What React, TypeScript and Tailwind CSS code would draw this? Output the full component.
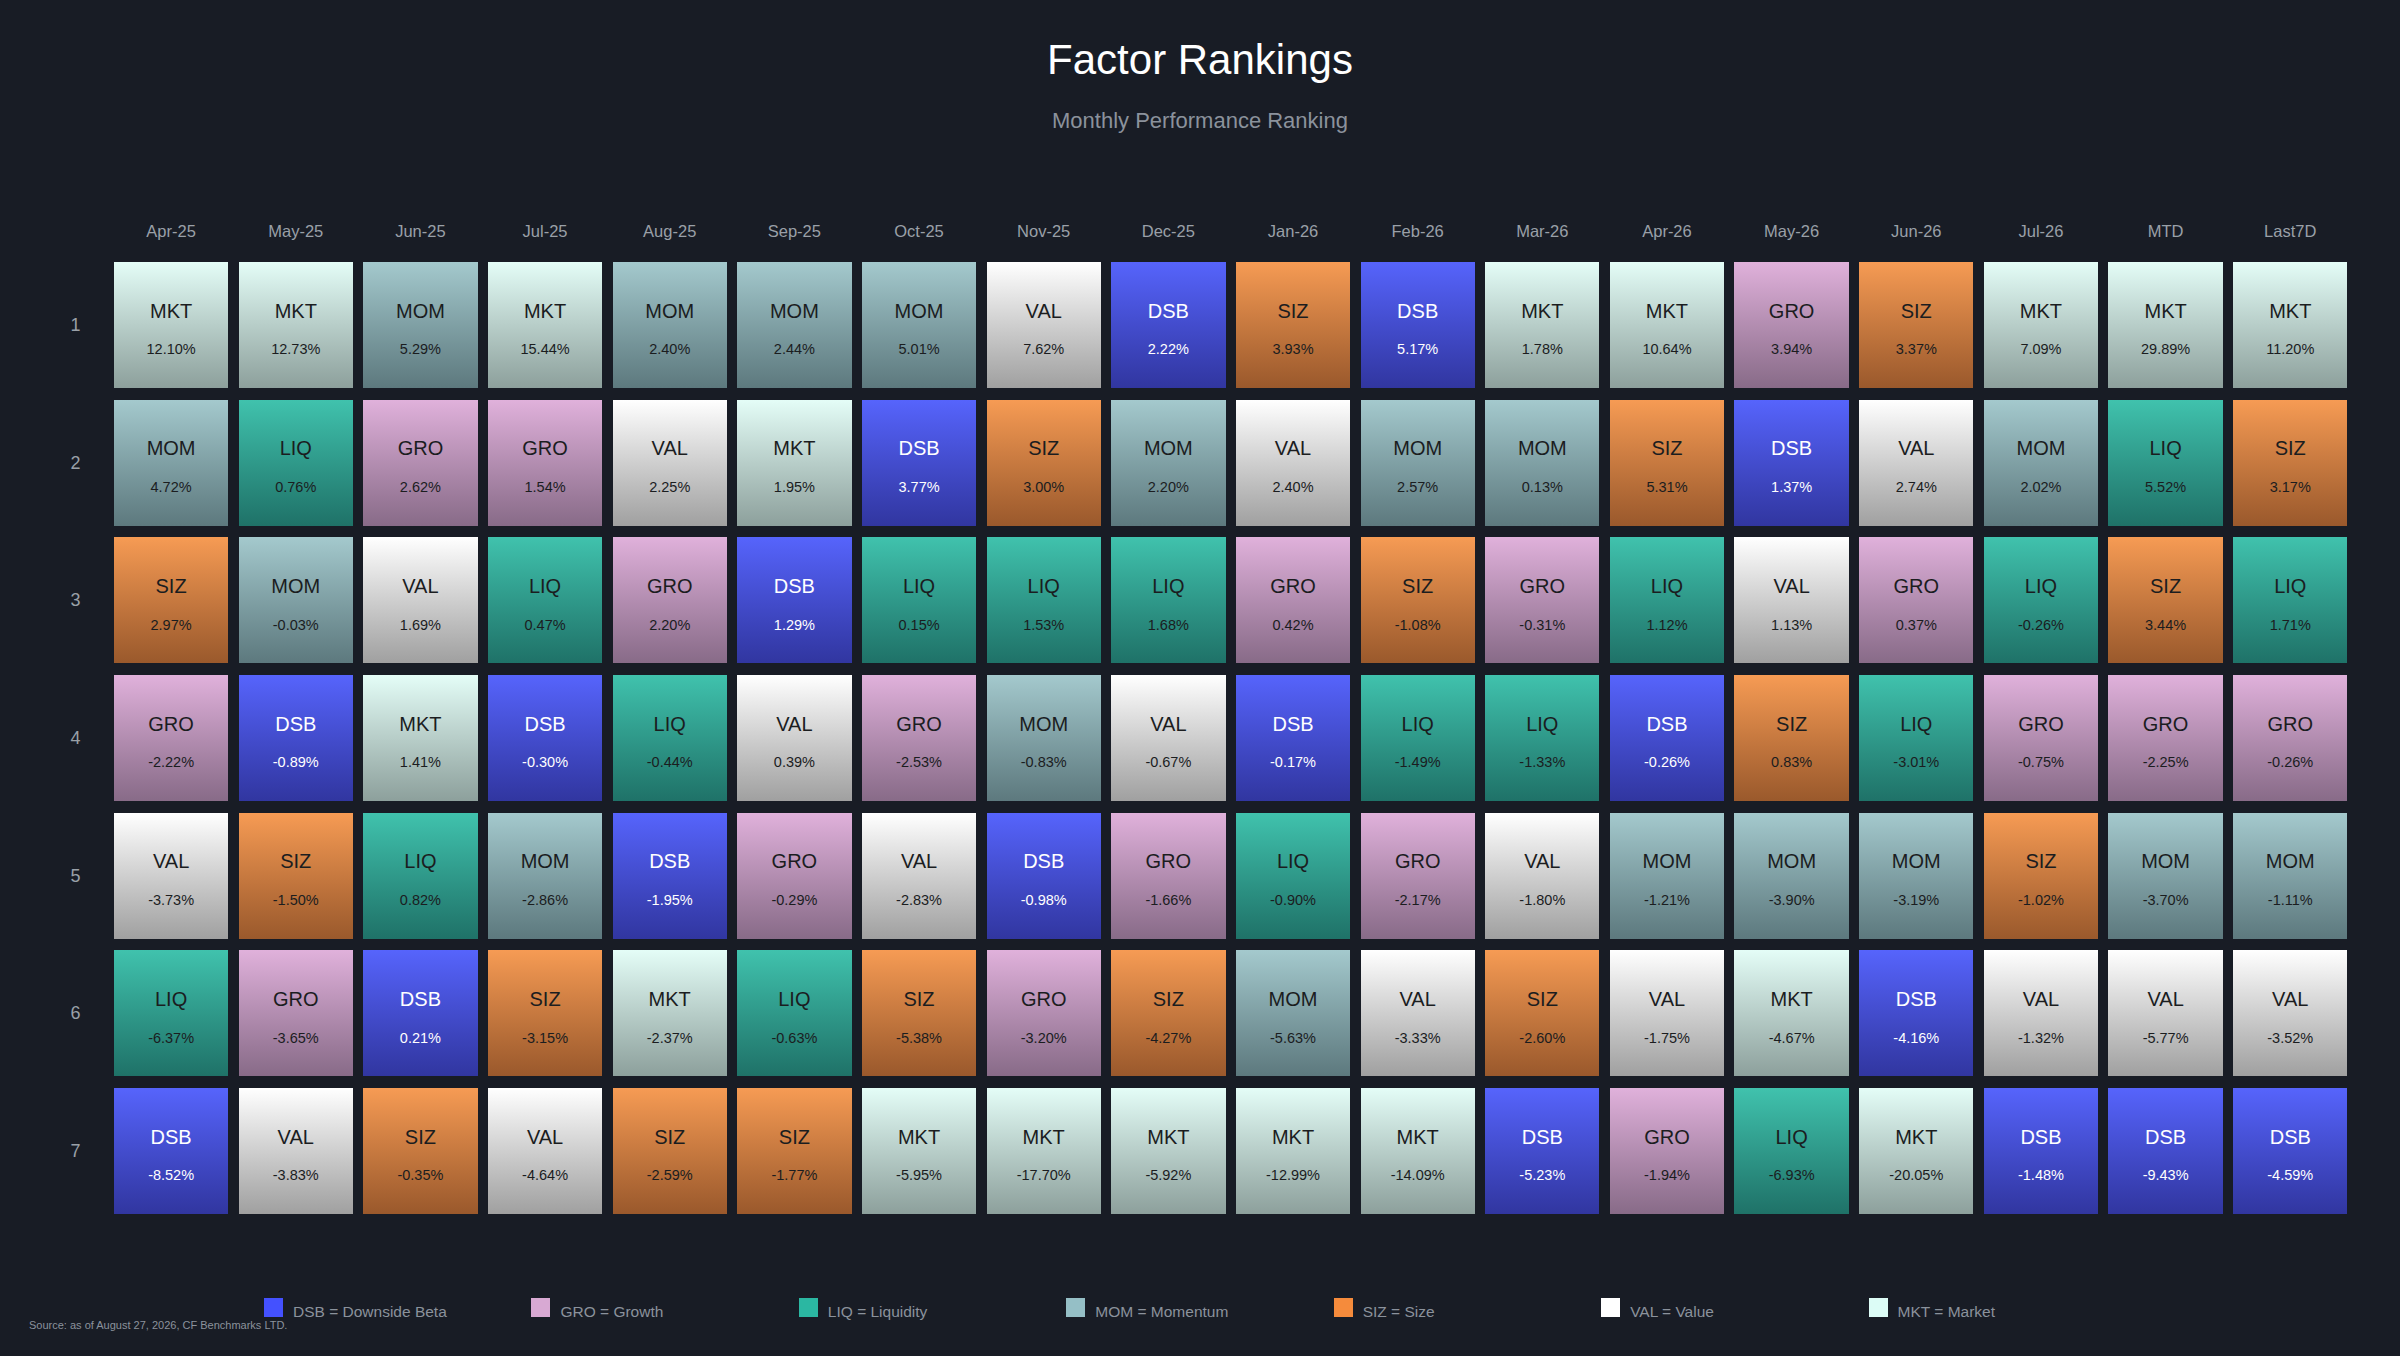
import React from "react";

type F = "MKT" | "MOM" | "SIZ" | "DSB" | "GRO" | "LIQ" | "VAL";

const cellCls: Record<F, string> = {
  MKT: "bg-linear-to-b from-[#e4fdf7] to-[#8da09c] text-[#1b1d1f]",
  MOM: "bg-linear-to-b from-[#a4c9cd] to-[#5d797e] text-[#1b1d1f]",
  SIZ: "bg-linear-to-b from-[#f69b54] to-[#9a592c] text-[#1b1d1f]",
  DSB: "bg-linear-to-b from-[#5664fc] to-[#3136a0] text-white",
  GRO: "bg-linear-to-b from-[#e0b1db] to-[#886b88] text-[#1b1d1f]",
  LIQ: "bg-linear-to-b from-[#40c2ad] to-[#1f7268] text-[#1b1d1f]",
  VAL: "bg-linear-to-b from-[#ffffff] to-[#a0a0a0] text-[#1b1d1f]",
};

const cols = [
  "Apr-25", "May-25", "Jun-25", "Jul-25", "Aug-25", "Sep-25", "Oct-25", "Nov-25", "Dec-25",
  "Jan-26", "Feb-26", "Mar-26", "Apr-26", "May-26", "Jun-26", "Jul-26", "MTD", "Last7D",
];

const raw = [
  "MKT 12.10,MKT 12.73,MOM 5.29,MKT 15.44,MOM 2.40,MOM 2.44,MOM 5.01,VAL 7.62,DSB 2.22,SIZ 3.93,DSB 5.17,MKT 1.78,MKT 10.64,GRO 3.94,SIZ 3.37,MKT 7.09,MKT 29.89,MKT 11.20",
  "MOM 4.72,LIQ 0.76,GRO 2.62,GRO 1.54,VAL 2.25,MKT 1.95,DSB 3.77,SIZ 3.00,MOM 2.20,VAL 2.40,MOM 2.57,MOM 0.13,SIZ 5.31,DSB 1.37,VAL 2.74,MOM 2.02,LIQ 5.52,SIZ 3.17",
  "SIZ 2.97,MOM -0.03,VAL 1.69,LIQ 0.47,GRO 2.20,DSB 1.29,LIQ 0.15,LIQ 1.53,LIQ 1.68,GRO 0.42,SIZ -1.08,GRO -0.31,LIQ 1.12,VAL 1.13,GRO 0.37,LIQ -0.26,SIZ 3.44,LIQ 1.71",
  "GRO -2.22,DSB -0.89,MKT 1.41,DSB -0.30,LIQ -0.44,VAL 0.39,GRO -2.53,MOM -0.83,VAL -0.67,DSB -0.17,LIQ -1.49,LIQ -1.33,DSB -0.26,SIZ 0.83,LIQ -3.01,GRO -0.75,GRO -2.25,GRO -0.26",
  "VAL -3.73,SIZ -1.50,LIQ 0.82,MOM -2.86,DSB -1.95,GRO -0.29,VAL -2.83,DSB -0.98,GRO -1.66,LIQ -0.90,GRO -2.17,VAL -1.80,MOM -1.21,MOM -3.90,MOM -3.19,SIZ -1.02,MOM -3.70,MOM -1.11",
  "LIQ -6.37,GRO -3.65,DSB 0.21,SIZ -3.15,MKT -2.37,LIQ -0.63,SIZ -5.38,GRO -3.20,SIZ -4.27,MOM -5.63,VAL -3.33,SIZ -2.60,VAL -1.75,MKT -4.67,DSB -4.16,VAL -1.32,VAL -5.77,VAL -3.52",
  "DSB -8.52,VAL -3.83,SIZ -0.35,VAL -4.64,SIZ -2.59,SIZ -1.77,MKT -5.95,MKT -17.70,MKT -5.92,MKT -12.99,MKT -14.09,DSB -5.23,GRO -1.94,LIQ -6.93,MKT -20.05,DSB -1.48,DSB -9.43,DSB -4.59",
];

const rows = raw.map((r) =>
  r.split(",").map((c) => {
    const [f, v] = c.split(" ");
    return { f: f as F, v: v + "%" };
  })
);

const legend: { sw: string; text: string }[] = [
  { sw: "bg-[#4451ff]", text: "DSB = Downside Beta" },
  { sw: "bg-[#d8a9d3]", text: "GRO = Growth" },
  { sw: "bg-[#2bb7a2]", text: "LIQ = Liquidity" },
  { sw: "bg-[#95bfc6]", text: "MOM = Momentum" },
  { sw: "bg-[#f58b3c]", text: "SIZ = Size" },
  { sw: "bg-[#ffffff]", text: "VAL = Value" },
  { sw: "bg-[#dcfcf6]", text: "MKT = Market" },
];

export default function App() {
  return (
    <div className="w-[2400px] h-[1356px] bg-[#181c25] font-['Liberation_Sans',Arial,sans-serif] overflow-hidden">
      <div className="pt-[36px] text-center text-white text-[42px] leading-[48px]">Factor Rankings</div>
      <div className="mt-[24px] text-center text-[#8b929c] text-[22px] leading-[26px]">
        Monthly Performance Ranking
      </div>

      <div className="mt-[87px] pl-[47.6px] grid grid-cols-[56px_repeat(18,114.3px)] gap-x-[10.37px]">
        <div />
        {cols.map((c) => (
          <div key={c} className="text-center text-[#9aa0a8] text-[16.5px] leading-[20px]">
            {c}
          </div>
        ))}
      </div>

      <div className="mt-[21px] pl-[47.6px] grid grid-cols-[56px_repeat(18,114.3px)] gap-x-[10.37px] gap-y-[11.7px]">
        {rows.map((row, i) => (
          <React.Fragment key={i}>
            <div className="flex items-center justify-center text-[#9aa0a8] text-[18px] leading-[22px]">
              {i + 1}
            </div>
            {row.map((cell, j) => (
              <div key={j} className={`h-[126px] flex flex-col items-center pt-[36.5px] ${cellCls[cell.f]}`}>
                <div className="text-[20px] leading-[24px]">{cell.f}</div>
                <div className="mt-[17.8px] text-[14.5px] leading-[18px]">{cell.v}</div>
              </div>
            ))}
          </React.Fragment>
        ))}
      </div>

      <div className="mt-[84.3px] w-[1872px] mx-auto grid grid-cols-7">
        {legend.map((l) => (
          <div key={l.text} className="flex items-start">
            <div className={`w-[19px] h-[19px] shrink-0 ${l.sw}`} />
            <div className="ml-[10px] mt-[3.4px] text-[15.5px] leading-[19px] text-[#8b929c] whitespace-nowrap">
              {l.text}
            </div>
          </div>
        ))}
      </div>
      <div className="mt-[-1.7px] pl-[29px] text-[11px] leading-[13px] text-[#8b929c]">
        Source: as of August 27, 2026, CF Benchmarks LTD.
      </div>
    </div>
  );
}
